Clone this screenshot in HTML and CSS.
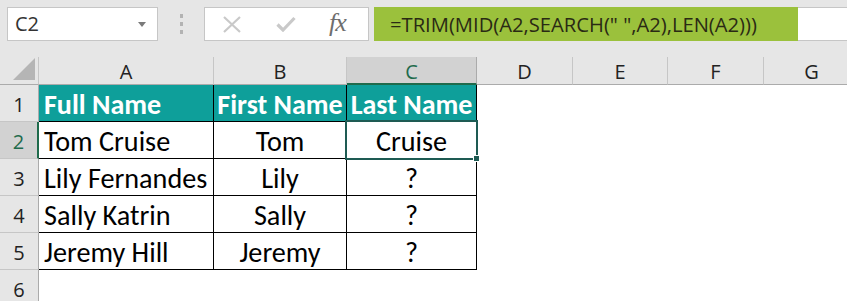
FILE: index.html
```html
<!DOCTYPE html>
<html>
<head>
<meta charset="utf-8">
<link rel="stylesheet" href="styles.css">
</head>
<body>
<div class="toolbar">
  <div class="namebox">
    <span class="ref">C2</span>
    <svg class="drop" width="8" height="5" viewBox="0 0 8 5"><path d="M0 0H8L4 5Z" fill="#7a7a7a"/></svg>
  </div>
  <div class="grip"><i></i><i></i><i></i></div>
  <div class="fbtns">
    <svg class="ico-x" width="18" height="17" viewBox="0 0 18 17"><path d="M1 1L17 16M17 1L1 16" stroke="#c9c9c9" stroke-width="2.2" fill="none"/></svg>
    <svg class="ico-ok" width="20" height="16" viewBox="0 0 20 16"><path d="M1.5 8.5L7 14L18.5 2" stroke="#c9c9c9" stroke-width="3.2" fill="none"/></svg>
    <span class="fx">fx</span>
  </div>
  <div class="formula"><span class="hl">=TRIM(MID(A2,SEARCH(" ",A2),LEN(A2)))</span></div>
</div>
<div class="sheet">
  <div class="corner"><svg width="22" height="22" viewBox="0 0 22 22"><path d="M22 0V22H0Z" fill="#b5b5b5"/></svg></div>
  <div class="ch">A</div>
  <div class="ch">B</div>
  <div class="ch sel">C</div>
  <div class="ch">D</div>
  <div class="ch">E</div>
  <div class="ch">F</div>
  <div class="ch">G</div>

  <div class="rh">1</div>
  <div class="c hd left">Full Name</div>
  <div class="c hd">First Name</div>
  <div class="c hd">Last Name</div>
  <div class="e"></div><div class="e"></div><div class="e"></div><div class="e"></div>

  <div class="rh sel">2</div>
  <div class="c left">Tom Cruise</div>
  <div class="c">Tom</div>
  <div class="c active">Cruise<span class="selbox"></span><span class="handle"></span></div>
  <div class="e"></div><div class="e"></div><div class="e"></div><div class="e"></div>

  <div class="rh">3</div>
  <div class="c left">Lily Fernandes</div>
  <div class="c">Lily</div>
  <div class="c">?</div>
  <div class="e"></div><div class="e"></div><div class="e"></div><div class="e"></div>

  <div class="rh">4</div>
  <div class="c left">Sally Katrin</div>
  <div class="c">Sally</div>
  <div class="c">?</div>
  <div class="e"></div><div class="e"></div><div class="e"></div><div class="e"></div>

  <div class="rh">5</div>
  <div class="c left">Jeremy Hill</div>
  <div class="c">Jeremy</div>
  <div class="c">?</div>
  <div class="e"></div><div class="e"></div><div class="e"></div><div class="e"></div>

  <div class="rh">6</div>
  <div class="e"></div><div class="e"></div><div class="e"></div>
  <div class="e"></div><div class="e"></div><div class="e"></div><div class="e"></div>
</div>
</body>
</html>
```
FILE: styles.css
```css
html, body {
  margin: 0;
  padding: 0;
  background: #ffffff;
  overflow: hidden;
}
body {
  width: 847px;
  height: 301px;
  font-family: "Open Sans", "DejaVu Sans", sans-serif;
}
.toolbar {
  height: 57px;
  box-sizing: border-box;
  padding-top: 7px;
  background: #e6e6e6;
  display: flex;
  align-items: flex-start;
}
.namebox {
  margin-left: 7px;
  width: 151px;
  height: 34px;
  box-sizing: border-box;
  background: #fff;
  border: 1px solid #c6c6c6;
  display: flex;
  align-items: center;
  justify-content: space-between;
  padding: 0 11px 0 7px;
}
.ref {
  font-size: 20px;
  color: #333;
  line-height: 1;
}
.drop { margin-top: 1px; }
.grip {
  width: 46px;
  height: 34px;
  display: flex;
  flex-direction: column;
  align-items: center;
  justify-content: center;
  gap: 4px;
}
.grip i {
  display: block;
  width: 3px;
  height: 4px;
  background: #b3b3b3;
}
.fbtns {
  width: 165px;
  height: 34px;
  box-sizing: border-box;
  background: #fff;
  border: 1px solid #c6c6c6;
  display: flex;
  align-items: center;
  padding-left: 18px;
}
.ico-x { margin-right: 35px; }
.ico-ok { margin-right: 33px; }
.fx {
  font-family: "Liberation Serif", "DejaVu Serif", serif;
  font-style: italic;
  font-size: 26px;
  color: #6e6e6e;
  line-height: 1;
  margin-top: -3px;
  letter-spacing: -1px;
}
.formula {
  margin-left: 5px;
  flex: 1;
  height: 34px;
  box-sizing: border-box;
  background: #fff;
  border-top: 1px solid #c6c6c6;
  border-bottom: 1px solid #c6c6c6;
  display: flex;
}
.hl {
  width: 424px;
  margin-top: -1px;
  height: 34px;
  box-sizing: border-box;
  background: #9bc13c;
  color: #2a2a14;
  font-size: 20.2px;
  line-height: 34px;
  padding-left: 16px;
  white-space: pre;
}
.sheet {
  display: grid;
  grid-template-columns: 39px 175px 133px 130px 96px 95px 96px 96px;
  grid-template-rows: 28px repeat(6, 37px);
}
.corner {
  background: #e6e6e6;
  border-right: 1px solid #c6c6c6;
  border-bottom: 1px solid #ababab;
  box-sizing: border-box;
  display: flex;
  align-items: flex-end;
  justify-content: flex-end;
  padding: 0 3px 4px 0;
}
.ch {
  background: #e6e6e6;
  box-sizing: border-box;
  border-right: 1px solid #c6c6c6;
  border-bottom: 1px solid #ababab;
  display: flex;
  align-items: center;
  justify-content: center;
  font-size: 20px;
  color: #222;
  padding-top: 2px;
}
.ch.sel {
  background: #d2d2d2;
  color: #1f6b4c;
  border-bottom: 2px solid #1f6b4c;
  border-right-color: #ababab;
}
.rh {
  background: #e6e6e6;
  box-sizing: border-box;
  border-right: 1px solid #ababab;
  border-bottom: 1px solid #c6c6c6;
  display: flex;
  align-items: center;
  justify-content: center;
  font-size: 20px;
  color: #222;
  padding-top: 2px;
}
.rh.sel {
  background: #d2d2d2;
  color: #1f6b4c;
  border-right: 2px solid #1f6b4c;
}
.c {
  box-sizing: border-box;
  border-right: 1px solid #000;
  border-bottom: 1px solid #000;
  display: flex;
  align-items: center;
  justify-content: center;
  font-family: "Carlito", "Lato", "Open Sans", sans-serif;
  font-size: 28.2px;
  color: #000;
  white-space: nowrap;
  padding-top: 2px;
}
.c.left {
  justify-content: flex-start;
  padding-left: 5px;
}
.c.hd {
  background: #0e9f9a;
  color: #fff;
  font-weight: bold;
  font-size: 28px;
}
.e { background: #fff; }
.active { position: relative; }
.selbox {
  position: absolute;
  left: -2px;
  top: -2px;
  right: -2px;
  bottom: -2px;
  border: 2px solid #1e5b53;
}
.handle {
  position: absolute;
  right: -4px;
  bottom: -4px;
  width: 5px;
  height: 5px;
  background: #1e5b53;
  border: 1px solid #fff;
}
```
